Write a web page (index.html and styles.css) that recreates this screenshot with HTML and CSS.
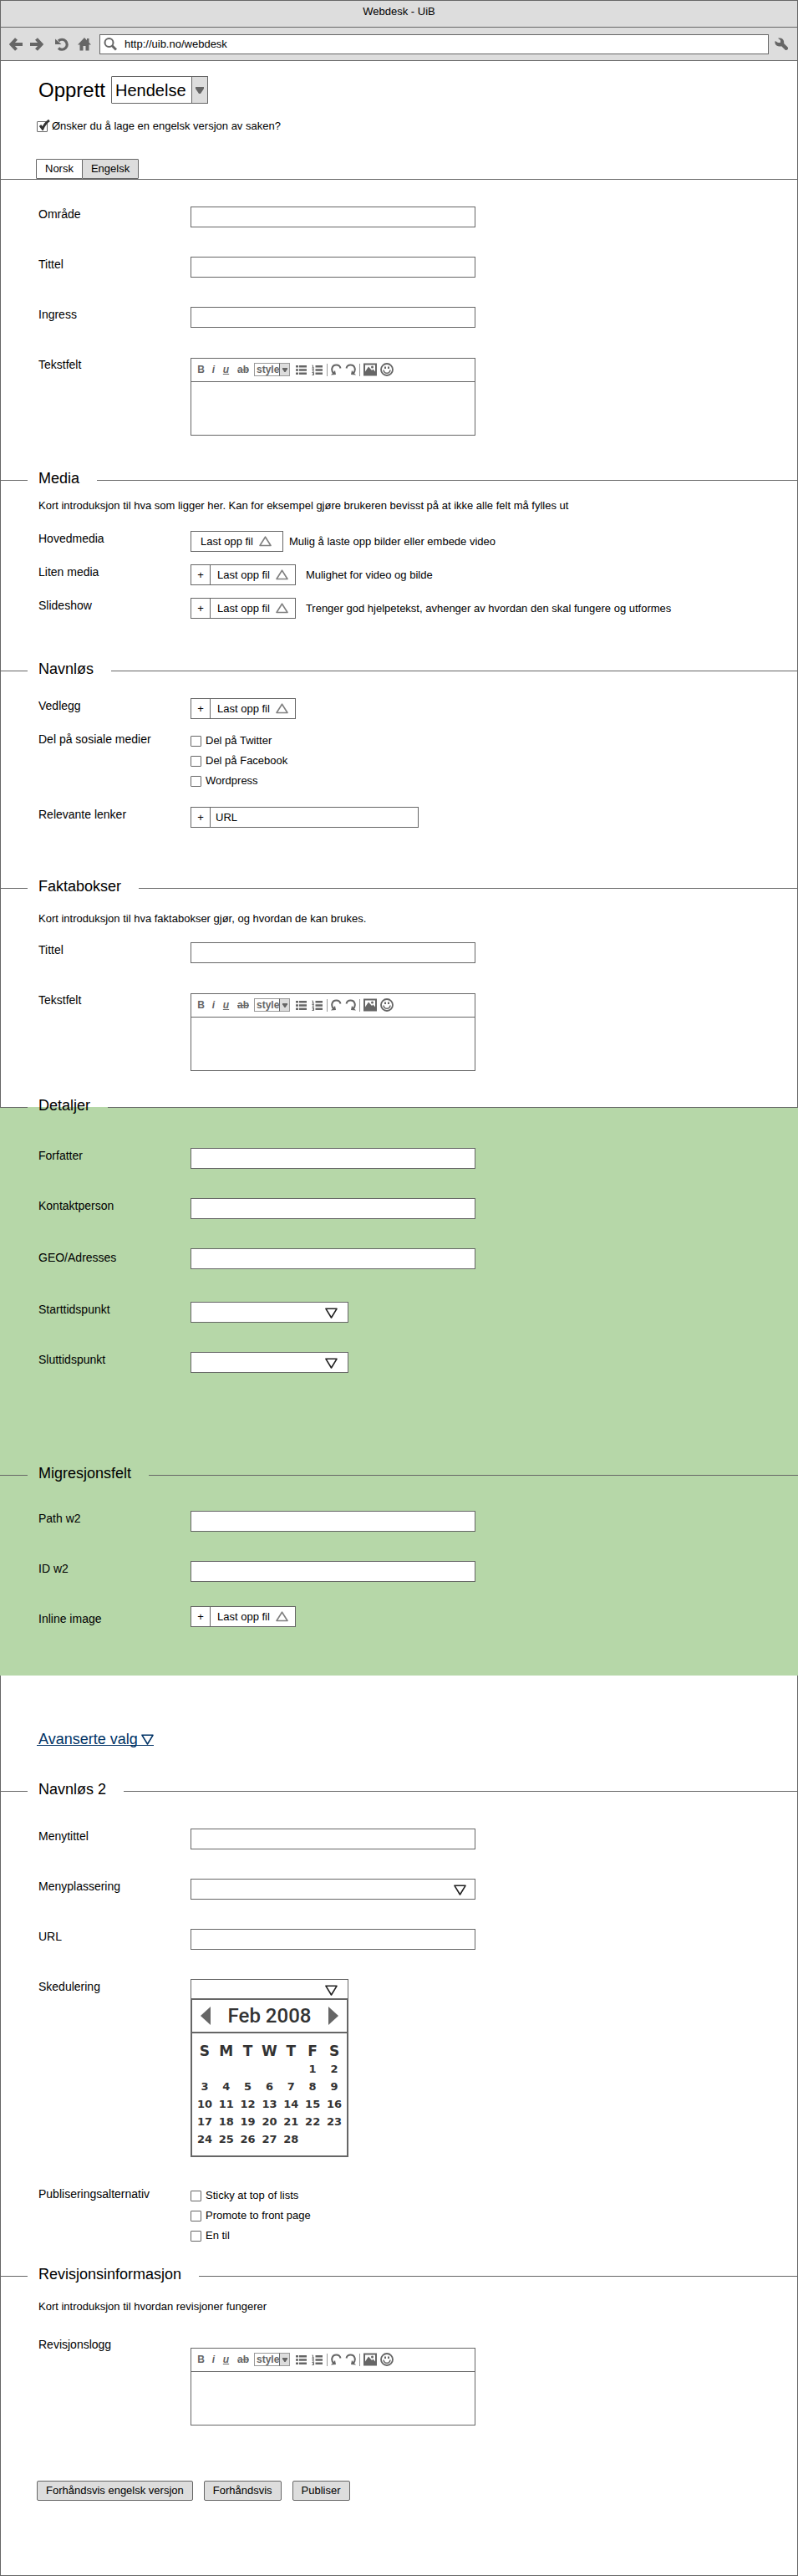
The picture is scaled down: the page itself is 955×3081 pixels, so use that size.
FILE: index.html
```html
<!DOCTYPE html>
<html lang="no">
<head>
<meta charset="utf-8">
<meta name="viewport" content="width=device-width, initial-scale=1">
<title>Webdesk - UiB</title>
<link rel="stylesheet" href="styles.css">
</head>
<body>
<svg class="sprite" aria-hidden="true">
  <symbol id="i-back" viewBox="0 0 16 16"><path d="M8.500 1.500 2.500 8l6 6.500M3 8h13" fill="none" stroke="#666" stroke-width="4"/></symbol>
  <symbol id="i-forward" viewBox="0 0 16 16"><path d="M7.500 1.500 13.500 8l-6 6.500M13 8H0" fill="none" stroke="#666" stroke-width="4"/></symbol>
  <symbol id="i-reload" viewBox="0 0 16 16"><path d="M4 4A6 6 0 1 1 4 12.500" fill="none" stroke="#666" stroke-width="3.200"/><path d="M0 1.500 7.500 8H0z" fill="#666"/></symbol>
  <symbol id="i-home" viewBox="0 0 16 16"><path d="M8 0 0 8.500h2.500V15.500h4V10h3v5.500h4V8.500H16L13.500 5.800V1H11v2.200z" fill="#666"/></symbol>
  <symbol id="i-search" viewBox="0 0 16 16"><circle cx="6.500" cy="6" r="5" fill="none" stroke="#666" stroke-width="2"/><path d="m10 9.500 5 5" stroke="#666" stroke-width="3"/></symbol>
  <symbol id="i-wrench" viewBox="0 0 16 16"><path d="M4 .8C7.500-.5 11 1.500 11.200 5c0 1-.1 1.600 0 2l4.300 4.300c.8.8.7 2.200 0 3s-2.200 1-3 .2L8.200 10.200C5 11 1 10 .5 6.500c-.2-1 0-2 .3-2.500L4 6h3V3z" fill="#666"/></symbol>
  <symbol id="i-up" viewBox="0 0 15 13"><path d="M7.500 1.200 14 11.500H1z" fill="none" stroke="#808080" stroke-width="1.600" stroke-linejoin="round"/></symbol>
  <symbol id="i-down" viewBox="0 0 15 13"><path d="M1 1.300h13L7.500 12z" fill="none" stroke="currentColor" stroke-width="1.600" stroke-linejoin="round"/></symbol>
  <symbol id="i-caret" viewBox="0 0 10 8"><path d="M0 0h10v2L6 8H4L0 2z" fill="#666"/></symbol>
  <symbol id="i-ul" viewBox="0 0 13 13"><path d="M4 2.200h9M4 6.500h9M4 10.800h9M0 2.200h3M0 6.500h3M0 10.800h3" stroke="#666" stroke-width="2.600"/></symbol>
  <symbol id="i-ol" viewBox="0 0 13 13"><path d="M4.500 2.200H13M4.500 6.500H13M4.500 10.800H13" stroke="#666" stroke-width="2.600"/><path d="M.5 1h1v3M.5 4H3M.5 5.500h2L1 8h2M.5 9.500h2v3h-2M1 11h1.500" fill="none" stroke="#666"/></symbol>
  <symbol id="i-undo" viewBox="0 0 13 14"><path d="M3.500 12C-.5 8 1 1.500 6.500 1.500c2.500 0 4.500 1.500 5 4" fill="none" stroke="#666" stroke-width="2"/><path d="m0 13.500 6-.5-1-5z" fill="#666"/></symbol>
  <symbol id="i-image" viewBox="0 0 16 15"><path d="M0 0h16v15H0z" fill="#666"/><path d="M2 2h12v8l-2.500-3L10 8.500 6 4 2 10z" fill="#fff"/><circle cx="10.500" cy="4.500" r="1.500" fill="#666"/></symbol>
  <symbol id="i-smile" viewBox="0 0 16 16"><circle cx="8" cy="8" r="7" fill="none" stroke="#666" stroke-width="1.800"/><path d="M4 8.500c.6 5 7.400 5 8 0" fill="none" stroke="#666" stroke-width="1.500"/><path d="M5 4.500h2v2.500H5zM9 4.500h2v2.500H9z" fill="#666"/></symbol>
</svg>

<div class="window">
  <header class="chrome">
    <div class="titlebar">Webdesk - UiB</div>
    <div class="navbar">
      <button class="nav-btn" aria-label="Tilbake"><svg><use href="#i-back"/></svg></button>
      <button class="nav-btn" aria-label="Frem"><svg><use href="#i-forward"/></svg></button>
      <button class="nav-btn nav-btn--reload" aria-label="Last på nytt"><svg><use href="#i-reload"/></svg></button>
      <button class="nav-btn" aria-label="Hjem"><svg><use href="#i-home"/></svg></button>
      <div class="address"><svg aria-hidden="true"><use href="#i-search"/></svg><input type="text" aria-label="Adresse" value="http://uib.no/webdesk"></div>
      <button class="nav-btn nav-btn--tools" aria-label="Verktøy"><svg><use href="#i-wrench"/></svg></button>
    </div>
  </header>

  <main>
    <div class="intro-head">
      <div class="create">
        <label for="type">Opprett</label>
        <span class="select select--type"><select id="type"><option>Hendelse</option></select><span class="select__cap"><svg aria-hidden="true"><use href="#i-caret"/></svg></span></span>
      </div>
      <label class="check check--lang"><input type="checkbox" checked><svg class="check__tick" viewBox="0 0 15 13" aria-hidden="true"><path d="M3 7l3 4Q9 4 14 1" fill="none" stroke="#333" stroke-width="3"/></svg>Ønsker du å lage en engelsk versjon av saken?</label>
      <div class="tabs" role="tablist">
        <button class="tab" role="tab" aria-selected="true">Norsk</button>
        <button class="tab tab--off" role="tab" aria-selected="false">Engelsk</button>
      </div>
    </div>

    <section class="section section--main">
      <div class="fields">
        <div class="field"><label for="omrade">Område</label><input class="box" type="text" id="omrade"></div>
        <div class="field"><label for="tittel">Tittel</label><input class="box" type="text" id="tittel"></div>
        <div class="field"><label for="ingress">Ingress</label><input class="box" type="text" id="ingress"></div>
        <div class="field"><label for="tekst">Tekstfelt</label>
          <div class="editor">
            <div class="toolbar">
              <button class="tool" aria-label="Fet"><b>B</b></button><button class="tool" aria-label="Kursiv"><i>i</i></button><button class="tool" aria-label="Understreket"><u>u</u></button><button class="tool tool--strike" aria-label="Gjennomstreket"><s>ab</s></button>
              <span class="select select--style"><select aria-label="Stil"><option>style</option></select><span class="select__cap"><svg aria-hidden="true"><use href="#i-caret"/></svg></span></span>
              <button class="tool tool--list" aria-label="Punktliste"><svg><use href="#i-ul"/></svg></button><button class="tool tool--list" aria-label="Nummerert liste"><svg><use href="#i-ol"/></svg></button>
              <span class="sep"></span>
              <button class="tool tool--hist" aria-label="Angre"><svg><use href="#i-undo"/></svg></button><button class="tool tool--hist tool--redo" aria-label="Gjør om"><svg><use href="#i-undo"/></svg></button>
              <span class="sep"></span>
              <button class="tool tool--pic" aria-label="Bilde"><svg><use href="#i-image"/></svg></button><button class="tool tool--pic" aria-label="Smilefjes"><svg><use href="#i-smile"/></svg></button>
            </div>
            <textarea id="tekst"></textarea>
          </div>
        </div>
      </div>
    </section>

    <section class="section section--media">
      <h2>Media</h2>
      <p>Kort introduksjon til hva som ligger her. Kan for eksempel gjøre brukeren bevisst på at ikke alle felt må fylles ut</p>
      <div class="fields fields--tight">
        <div class="field"><span class="label">Hovedmedia</span><div class="control"><button class="upload upload--plain">Last opp fil<svg aria-hidden="true"><use href="#i-up"/></svg></button><span class="help">Mulig å laste opp bilder eller embede video</span></div></div>
        <div class="field"><span class="label">Liten media</span><div class="control"><div class="group"><button class="plus">+</button><button class="upload">Last opp fil<svg aria-hidden="true"><use href="#i-up"/></svg></button></div><span class="help help--far">Mulighet for video og bilde</span></div></div>
        <div class="field"><span class="label">Slideshow</span><div class="control"><div class="group"><button class="plus">+</button><button class="upload">Last opp fil<svg aria-hidden="true"><use href="#i-up"/></svg></button></div><span class="help help--far">Trenger god hjelpetekst, avhenger av hvordan den skal fungere og utformes</span></div></div>
      </div>
    </section>

    <section class="section section--links">
      <h2>Navnløs</h2>
      <div class="fields fields--tight">
        <div class="field"><span class="label">Vedlegg</span><div class="control"><div class="group"><button class="plus">+</button><button class="upload">Last opp fil<svg aria-hidden="true"><use href="#i-up"/></svg></button></div></div></div>
        <div class="field" role="group" aria-labelledby="sosiale"><span class="label" id="sosiale">Del på sosiale medier</span>
          <div class="checks">
            <label class="check"><input type="checkbox">Del på Twitter</label>
            <label class="check"><input type="checkbox">Del på Facebook</label>
            <label class="check"><input type="checkbox">Wordpress</label>
          </div>
        </div>
        <div class="field"><label for="lenker">Relevante lenker</label><div class="control"><div class="group group--url"><button class="plus">+</button><input type="text" id="lenker" value="URL"></div></div></div>
      </div>
    </section>

    <section class="section section--facts">
      <h2>Faktabokser</h2>
      <p>Kort introduksjon til hva faktabokser gjør, og hvordan de kan brukes.</p>
      <div class="fields">
        <div class="field"><label for="fakta-tittel">Tittel</label><input class="box" type="text" id="fakta-tittel"></div>
        <div class="field"><label for="fakta-tekst">Tekstfelt</label>
          <div class="editor">
            <div class="toolbar">
              <button class="tool" aria-label="Fet"><b>B</b></button><button class="tool" aria-label="Kursiv"><i>i</i></button><button class="tool" aria-label="Understreket"><u>u</u></button><button class="tool tool--strike" aria-label="Gjennomstreket"><s>ab</s></button>
              <span class="select select--style"><select aria-label="Stil"><option>style</option></select><span class="select__cap"><svg aria-hidden="true"><use href="#i-caret"/></svg></span></span>
              <button class="tool tool--list" aria-label="Punktliste"><svg><use href="#i-ul"/></svg></button><button class="tool tool--list" aria-label="Nummerert liste"><svg><use href="#i-ol"/></svg></button>
              <span class="sep"></span>
              <button class="tool tool--hist" aria-label="Angre"><svg><use href="#i-undo"/></svg></button><button class="tool tool--hist tool--redo" aria-label="Gjør om"><svg><use href="#i-undo"/></svg></button>
              <span class="sep"></span>
              <button class="tool tool--pic" aria-label="Bilde"><svg><use href="#i-image"/></svg></button><button class="tool tool--pic" aria-label="Smilefjes"><svg><use href="#i-smile"/></svg></button>
            </div>
            <textarea id="fakta-tekst"></textarea>
          </div>
        </div>
      </div>
    </section>

    <div class="highlight">
      <section class="section section--details">
        <h2>Detaljer</h2>
        <div class="fields">
          <div class="field"><label for="forfatter">Forfatter</label><input class="box" type="text" id="forfatter"></div>
          <div class="field"><label for="kontakt">Kontaktperson</label><input class="box" type="text" id="kontakt"></div>
          <div class="field field--geo"><label for="geo">GEO/Adresses</label><input class="box" type="text" id="geo"></div>
          <div class="field"><label for="start">Starttidspunkt</label><span class="select select--short"><select class="box" id="start"><option></option></select><svg aria-hidden="true"><use href="#i-down"/></svg></span></div>
          <div class="field"><label for="slutt">Sluttidspunkt</label><span class="select select--short"><select class="box" id="slutt"><option></option></select><svg aria-hidden="true"><use href="#i-down"/></svg></span></div>
        </div>
      </section>
      <section class="section section--migration">
        <h2>Migresjonsfelt</h2>
        <div class="fields">
          <div class="field"><label for="path">Path w2</label><input class="box" type="text" id="path"></div>
          <div class="field"><label for="idw2">ID w2</label><input class="box" type="text" id="idw2"></div>
          <div class="field field--inline"><span class="label">Inline image</span><div class="control"><div class="group"><button class="plus">+</button><button class="upload">Last opp fil<svg aria-hidden="true"><use href="#i-up"/></svg></button></div></div></div>
        </div>
      </section>
    </div>

    <div class="advanced"><a href="#avansert">Avanserte valg<svg aria-hidden="true"><use href="#i-down"/></svg></a></div>

    <section class="section section--menu" id="avansert">
      <h2>Navnløs 2</h2>
      <div class="fields">
        <div class="field"><label for="menytittel">Menytittel</label><input class="box" type="text" id="menytittel"></div>
        <div class="field"><label for="menyplass">Menyplassering</label><span class="select select--long"><select class="box" id="menyplass"><option></option></select><svg aria-hidden="true"><use href="#i-down"/></svg></span></div>
        <div class="field"><label for="url">URL</label><input class="box" type="text" id="url"></div>
        <div class="field"><label for="sked">Skedulering</label>
          <div class="schedule">
            <span class="select select--short"><select class="box" id="sked"><option></option></select><svg aria-hidden="true"><use href="#i-down"/></svg></span>
            <div class="calendar">
              <div class="calendar__head">
                <button aria-label="Forrige måned"><svg viewBox="0 0 12 22"><path d="M12 0v22L0 11z" fill="#666"/></svg></button>
                <span>Feb 2008</span>
                <button aria-label="Neste måned"><svg viewBox="0 0 12 22"><path d="M0 0v22l12-11z" fill="#666"/></svg></button>
              </div>
              <table>
                <thead><tr><th>S</th><th>M</th><th>T</th><th>W</th><th>T</th><th>F</th><th>S</th></tr></thead>
                <tbody>
                  <tr><td></td><td></td><td></td><td></td><td></td><td>1</td><td>2</td></tr>
                  <tr><td>3</td><td>4</td><td>5</td><td>6</td><td>7</td><td>8</td><td>9</td></tr>
                  <tr><td>10</td><td>11</td><td>12</td><td>13</td><td>14</td><td>15</td><td>16</td></tr>
                  <tr><td>17</td><td>18</td><td>19</td><td>20</td><td>21</td><td>22</td><td>23</td></tr>
                  <tr><td>24</td><td>25</td><td>26</td><td>27</td><td>28</td><td></td><td></td></tr>
                </tbody>
              </table>
            </div>
          </div>
        </div>
        <div class="field" role="group" aria-labelledby="pub"><span class="label" id="pub">Publiseringsalternativ</span>
          <div class="checks">
            <label class="check"><input type="checkbox">Sticky at top of lists</label>
            <label class="check"><input type="checkbox">Promote to front page</label>
            <label class="check"><input type="checkbox">En til</label>
          </div>
        </div>
      </div>
    </section>

    <section class="section section--revision">
      <h2>Revisjonsinformasjon</h2>
      <p>Kort introduksjon til hvordan revisjoner fungerer</p>
      <div class="fields">
        <div class="field"><label for="logg">Revisjonslogg</label>
          <div class="editor">
            <div class="toolbar">
              <button class="tool" aria-label="Fet"><b>B</b></button><button class="tool" aria-label="Kursiv"><i>i</i></button><button class="tool" aria-label="Understreket"><u>u</u></button><button class="tool tool--strike" aria-label="Gjennomstreket"><s>ab</s></button>
              <span class="select select--style"><select aria-label="Stil"><option>style</option></select><span class="select__cap"><svg aria-hidden="true"><use href="#i-caret"/></svg></span></span>
              <button class="tool tool--list" aria-label="Punktliste"><svg><use href="#i-ul"/></svg></button><button class="tool tool--list" aria-label="Nummerert liste"><svg><use href="#i-ol"/></svg></button>
              <span class="sep"></span>
              <button class="tool tool--hist" aria-label="Angre"><svg><use href="#i-undo"/></svg></button><button class="tool tool--hist tool--redo" aria-label="Gjør om"><svg><use href="#i-undo"/></svg></button>
              <span class="sep"></span>
              <button class="tool tool--pic" aria-label="Bilde"><svg><use href="#i-image"/></svg></button><button class="tool tool--pic" aria-label="Smilefjes"><svg><use href="#i-smile"/></svg></button>
            </div>
            <textarea id="logg"></textarea>
          </div>
        </div>
      </div>
    </section>

    <div class="actions">
      <button class="btn">Forhåndsvis engelsk versjon</button>
      <button class="btn">Forhåndsvis</button>
      <button class="btn">Publiser</button>
    </div>
  </main>
</div>
</body>
</html>
```
FILE: styles.css
```css
:root {
  --line: #666;
  --bar: #ddd;
  --green: #b6d7a8;
  --link: #003366;
}

*, *::before, *::after { box-sizing: border-box; }

body {
  margin: 0;
  font: 13px/16px "Liberation Sans", Arial, sans-serif;
  color: #000;
  background: #fff;
}

button, input, select, textarea {
  margin: 0;
  padding: 0;
  border: 0;
  border-radius: 0;
  font: inherit;
  color: inherit;
  background: none;
  appearance: none;
}

button { cursor: pointer; }
svg { display: block; flex: none; }
.sprite { position: absolute; width: 0; height: 0; }

.window {
  min-height: 100vh;
  border: 1px solid var(--line);
}

/* Browser bars */
.chrome { background: var(--bar); }

.titlebar {
  height: 32px;
  padding-top: 5px;
  border-bottom: 1px solid var(--line);
  text-align: center;
}

.navbar {
  display: flex;
  align-items: center;
  height: 40px;
  padding: 0 11px 0 10px;
  border-bottom: 1px solid var(--line);
}

.nav-btn { margin-right: 9px; }
.nav-btn svg, .address svg { width: 16px; height: 16px; }
.nav-btn--reload { margin: 0 11px 0 5px; }
.nav-btn--tools { margin: 0 0 0 7px; }

.address {
  display: flex;
  flex: 1;
  align-items: center;
  gap: 9px;
  height: 24px;
  margin-left: 1px;
  padding-left: 4px;
  border: 1px solid var(--line);
  background: #fff;
}

.address input { flex: 1; min-width: 0; }

/* Page head */
.intro-head {
  padding: 18px 43px 0;
  border-bottom: 1px solid var(--line);
}

.create {
  display: flex;
  align-items: center;
  gap: 7px;
  padding-left: 2px;
}

.create label { font-size: 24px; line-height: 28px; }

.select { position: relative; display: block; }
.select select { display: block; width: 100%; }
.select > svg {
  position: absolute;
  top: 7px;
  right: 13px;
  width: 15px;
  height: 13px;
  color: #222;
  pointer-events: none;
}

.select__cap {
  position: absolute;
  top: 0;
  right: 0;
  bottom: 0;
  display: grid;
  place-items: center;
  border: 1px solid var(--line);
  background: var(--bar);
  pointer-events: none;
}

.select--type { width: 116px; }
.select--type select {
  height: 33px;
  padding-left: 4px;
  border: 1px solid var(--line);
  border-radius: 1px;
  font-size: 20px;
  line-height: 24px;
}
.select--type .select__cap { width: 20px; }
.select--type svg { width: 10px; height: 8px; }

.check {
  position: relative;
  display: flex;
  align-items: center;
  gap: 5px;
}

.check input {
  width: 13px;
  height: 13px;
  border: 1px solid var(--line);
  border-radius: 1px;
  background: #fff;
}

.check__tick {
  position: absolute;
  top: 0;
  left: 1px;
  width: 15px;
  height: 13px;
  pointer-events: none;
}

.check--lang { width: max-content; margin-top: 19px; }

.tabs {
  display: flex;
  margin: 31px 0 0 -1px;
}

.tab {
  height: 24px;
  padding: 0 10px;
  border: 1px solid var(--line);
  border-radius: 1px;
}

.tab--off { margin-left: -1px; background: var(--bar); }

/* Sections */
h2 {
  display: flex;
  gap: 13px;
  margin: 0;
  font-size: 18px;
  font-weight: 400;
  line-height: 20px;
}

h2::before, h2::after {
  content: "";
  width: 32px;
  height: 1px;
  margin-top: 12px;
  background: var(--line);
}

h2::after { flex: 1; margin-left: 8px; }

.section p { margin: 0; padding: 0 45px; }
.section .fields { padding: 0 43px; }

.fields {
  display: flex;
  flex-direction: column;
  gap: 35px;
}

.fields--tight { gap: 15px; }

.field {
  display: grid;
  grid-template-columns: 184px minmax(0, 1fr);
  align-items: start;
}

.field > label, .label {
  padding-left: 2px;
  font-size: 14px;
  line-height: 18px;
}

.box {
  width: 100%;
  max-width: 341px;
  height: 25px;
  padding: 0 8px;
  border: 1px solid var(--line);
  background: #fff;
}

.select--short { width: 189px; }
.select--long { max-width: 341px; }
.select--long > svg { right: 11px; }

.section--main { padding-top: 32px; }

.section--media { margin-top: 41px; }
.section--media p { margin: 15px 0 22px; }

.section--links { margin-top: 50px; }
.section--links .fields { margin-top: 25px; }

.section--facts { margin-top: 60px; }
.section--facts p { margin: 21px 0 20px; }

.highlight {
  margin: 43px -1px 0;
  padding: 0 1px 58px;
  background: var(--green);
}

.highlight h2::before { width: 33px; margin-left: -1px; }
.highlight h2::after { margin-right: -1px; }

.section--details h2 { position: relative; top: -12px; margin-bottom: -12px; }
.section--details .fields { padding-top: 41px; }
.field--geo { margin-bottom: 4px; }
.field--geo label { padding-top: 2px; }

.section--migration { padding-top: 110px; }
.section--migration .fields { margin-top: 35px; }
.field--inline { margin-top: -6px; }
.field--inline .label { padding-top: 6px; }

.advanced { padding: 66px 43px 0; }
.advanced a {
  display: flex;
  gap: 4px;
  width: max-content;
  height: 18px;
  padding-left: 2px;
  border-bottom: 1px solid var(--link);
  color: var(--link);
  font-size: 18px;
  line-height: 20px;
  text-decoration: none;
}
.advanced svg { width: 15px; height: 13px; margin-top: 4px; }

.section--menu { margin-top: 42px; }
.section--menu .fields { margin-top: 37px; }

.section--revision { margin-top: 20px; }
.section--revision p { margin: 21px 0 28px; }
.section--revision .editor { margin-top: 13px; }

/* Editor */
.editor {
  max-width: 341px;
  margin-top: 1px;
  border: 1px solid var(--line);
  background: #fff;
}

.toolbar {
  display: flex;
  align-items: center;
  height: 28px;
  padding: 0 0 1px 4px;
  border-bottom: 1px solid var(--line);
  color: var(--line);
  font-size: 12px;
  font-weight: 700;
}

.tool {
  display: grid;
  place-items: center;
  width: 15px;
  height: 18px;
}

.tool i, .tool u { font-style: italic; }
.tool svg { width: 13px; height: 13px; }
.tool--strike { width: 26px; }
.tool--list { width: 19px; }
.tool--hist { width: 17px; }
.tool--hist svg { height: 14px; }
.tool--redo svg { transform: scaleX(-1); }
.tool--pic { width: 20px; }
.tool--pic svg { width: 16px; height: 16px; }

.select--style { width: 43px; margin-right: 4px; }
.select--style select {
  height: 16px;
  padding-left: 2px;
  border: 1px solid #999;
  line-height: 13px;
}
.select--style .select__cap { width: 13px; border-color: #999; border-left-color: var(--line); }
.select--style svg { width: 6px; height: 7px; }

.sep {
  width: 1px;
  height: 15px;
  margin: 0 2px;
  background: #999;
}

.editor textarea {
  display: block;
  width: 100%;
  height: 63px;
  padding: 8px;
  resize: none;
}

/* Upload and link groups */
.control { display: flex; align-items: center; }

.group {
  display: flex;
  height: 25px;
  border: 1px solid var(--line);
  background: #fff;
}

.plus {
  width: 23px;
  border-right: 1px solid var(--line);
}

.upload {
  display: flex;
  align-items: center;
  gap: 7px;
  padding: 0 8px;
}
.upload svg { width: 15px; height: 13px; }

.upload--plain {
  height: 25px;
  padding: 0 13px 0 11px;
  border: 1px solid var(--line);
}

.help { padding-left: 7px; }
.help--far { padding-left: 12px; }

.group--url { width: 273px; }
.group--url input { flex: 1; min-width: 0; padding-left: 6px; }

.checks {
  display: grid;
  gap: 8px;
  justify-items: start;
  padding: 3px 0 8px;
}

/* Calendar */
.calendar {
  position: relative;
  width: 189px;
  height: 190px;
  margin-top: -2px;
  border: 2px solid var(--line);
  background: #fff;
  color: #333;
}

.calendar__head {
  display: flex;
  align-items: center;
  justify-content: space-between;
  height: 40px;
  padding: 0 10px;
  border-bottom: 2px solid var(--line);
  font: 500 24px/28px Roboto, sans-serif;
}
.calendar__head svg { width: 12px; height: 22px; }

.calendar table {
  width: 181px;
  margin: 11px 2px 0;
  border-collapse: collapse;
  table-layout: fixed;
  font: 700 13px/21px "DejaVu Sans", sans-serif;
}
.calendar th, .calendar td { height: 21px; padding: 0; text-align: center; }
.calendar th { font-size: 17px; }

/* Actions */
.actions {
  display: flex;
  gap: 13px;
  padding: 66px 43px 89px;
}

.btn {
  height: 24px;
  padding: 0 10px;
  border: 1px solid var(--line);
  border-radius: 2px;
  background: var(--bar);
}
```
